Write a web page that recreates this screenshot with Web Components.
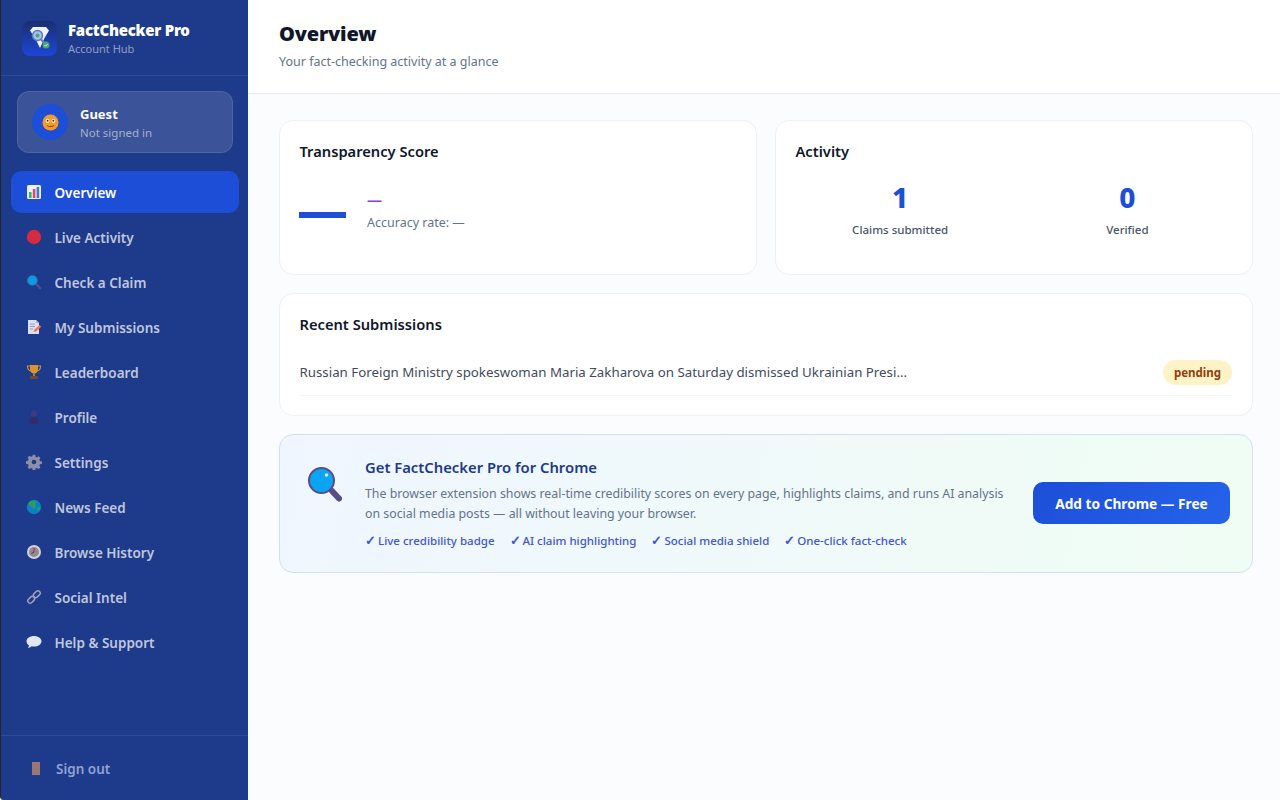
<!doctype html>
<html lang="en"><head><meta charset="utf-8"><title>FactChecker Pro</title>
<style>
html,body{margin:0;height:100%;}
body{font-family:"Noto Sans","Open Sans","Liberation Sans",sans-serif;background:#fff;overflow:hidden;}
</style></head>
<body>
<fc-app>
  <fc-sidebar slot="side">
    <fc-brand slot="brand"></fc-brand>
    <fc-user slot="user"></fc-user>
    <fc-nav-item active><svg slot="icon" viewBox="0 0 16 16" width="16" height="16"><rect x="1" y="1" width="14" height="14" rx="1.500" fill="#eef1f5"/><rect x="3" y="8" width="2.600" height="6" fill="#2fb96a"/><rect x="6.800" y="5" width="2.600" height="9" fill="#e83f72"/><rect x="10.600" y="3" width="2.600" height="11" fill="#3a7bd5"/></svg>Overview</fc-nav-item>
    <fc-nav-item><svg slot="icon" viewBox="0 0 16 16" width="16" height="16"><circle cx="8" cy="8" r="7.200" fill="#d42c3e"/></svg>Live Activity</fc-nav-item>
    <fc-nav-item><svg slot="icon" viewBox="0 0 16 16" width="16" height="16"><path d="M10 10l4.200 4.200" stroke="#5b4a8c" stroke-width="2" stroke-linecap="round"/><circle cx="6.400" cy="6.400" r="5" fill="#0a9be8" stroke="#3c5f9a" stroke-width=".8"/></svg>Check a Claim</fc-nav-item>
    <fc-nav-item><svg slot="icon" viewBox="0 0 16 16" width="16" height="16"><path d="M2 1h8l3 3v11H2z" fill="#dcdff0"/><path d="M10 1l3 3h-3z" fill="#aab0cc"/><path d="M4 5h5M4 7.500h5M4 10h3" stroke="#8d93b5" stroke-width=".9"/><path d="M7.500 13l1-2.600 5-4.400 1.800 1.800-4.800 4.400z" fill="#f0764f"/></svg>My Submissions</fc-nav-item>
    <fc-nav-item><svg slot="icon" viewBox="0 0 16 16" width="16" height="16"><path d="M4 1h8v4.500c0 2.500-1.700 4-4 4s-4-1.500-4-4z" fill="#d9952b"/><path d="M4 2H1.500c0 3 1 4.500 3 5M12 2h2.500c0 3-1 4.500-3 5" fill="none" stroke="#d9952b" stroke-width="1.100"/><rect x="7" y="9" width="2" height="3" fill="#b87820"/><rect x="4" y="12" width="8" height="3" rx=".6" fill="#6b4a3a"/></svg>Leaderboard</fc-nav-item>
    <fc-nav-item><svg slot="icon" viewBox="0 0 16 16" width="16" height="16"><circle cx="8" cy="4.500" r="3.200" fill="#3c3a80"/><path d="M3.500 15v-2.500c0-3 2-4.500 4.500-4.500s4.500 1.500 4.500 4.500V15z" fill="#2f2c70"/></svg>Profile</fc-nav-item>
    <fc-nav-item><svg slot="icon" viewBox="0 0 16 16" width="16" height="16"><path d="M6.800 .8h2.400l.4 2 1.300.6 1.800-1.100 1.700 1.700-1.100 1.800.6 1.300 2 .4v2.400l-2 .4-.6 1.300 1.100 1.800-1.700 1.700-1.800-1.100-1.300.6-.4 2H6.800l-.4-2-1.300-.6-1.800 1.100-1.700-1.700 1.100-1.800-.6-1.300-2-.4V6.900l2-.4.6-1.300L1.600 3.400 3.300 1.700l1.800 1.100 1.300-.6z" fill="#8b8fa8"/><circle cx="8" cy="8" r="2.300" fill="#1e3a8a"/></svg>Settings</fc-nav-item>
    <fc-nav-item><svg slot="icon" viewBox="0 0 16 16" width="16" height="16"><circle cx="8" cy="8" r="7.200" fill="#0d7fc4"/><path d="M3 3.500c2-2 5-2.500 6-1.800l1.500 2-1.500 1.500 1 2-2.500 3-1.500-2.500-3-1zM11 9l2.500-1 .8 2-2 2.500z" fill="#2f9d57"/></svg>News Feed</fc-nav-item>
    <fc-nav-item><svg slot="icon" viewBox="0 0 16 16" width="16" height="16"><circle cx="8" cy="8" r="7" fill="#d4d2d6"/><circle cx="8" cy="8" r="5" fill="#8f8a95"/><path d="M8 8V4" stroke="#b93a3a" stroke-width="1.300"/><path d="M8 8l-2.500 1.500" stroke="#3a3a4a" stroke-width="1"/></svg>Browse History</fc-nav-item>
    <fc-nav-item><svg slot="icon" viewBox="0 0 16 16" width="16" height="16" fill="none" stroke="#9da3bb" stroke-width="1.500"><rect x="-3.800" y="-2.300" width="7.600" height="4.600" rx="2.300" transform="translate(5.200 10.800) rotate(-45)"/><rect x="-3.800" y="-2.300" width="7.600" height="4.600" rx="2.300" transform="translate(10.800 5.200) rotate(-45)"/></svg>Social Intel</fc-nav-item>
    <fc-nav-item><svg slot="icon" viewBox="0 0 16 16" width="16" height="16"><path d="M8 2c4.200 0 7.500 2.400 7.500 5.300S12.200 12.600 8 12.600c-.9 0-1.700-.1-2.500-.3-1 1-2.300 1.500-3.700 1.500.7-.7 1.100-1.500 1.200-2.400C1.300 10.500.5 9 .5 7.300.5 4.400 3.800 2 8 2z" fill="#dfe6f5"/></svg>Help &amp; Support</fc-nav-item>
    <fc-signout slot="foot"></fc-signout>
  </fc-sidebar>
  <fc-header slot="head" heading="Overview" sub="Your fact-checking activity at a glance"></fc-header>
  <fc-score></fc-score>
  <fc-activity></fc-activity>
  <fc-recent></fc-recent>
  <fc-promo></fc-promo>
</fc-app>
<script>
function def(name, html){
  customElements.define(name, class extends HTMLElement{
    connectedCallback(){
      if(this.shadowRoot) return;
      const r=this.attachShadow({mode:"open"});
      r.innerHTML=typeof html==="function"?html(this):html;
    }
  });
}
const base=':host{font-family:"Noto Sans","Open Sans","Liberation Sans",sans-serif;box-sizing:border-box;}*{box-sizing:border-box;}';
def("fc-app",`<style>${base}
:host{display:grid;grid-template-columns:248px 1fr;height:800px;background:#fff;}
.main{display:flex;flex-direction:column;min-width:0;height:800px;}
.body{flex:1;background:#fbfcfe;padding:26px 27px 0 31px;display:grid;grid-template-columns:478px 478px;column-gap:18px;grid-template-rows:155px 123px 139px;row-gap:18px;align-content:start;}
::slotted(fc-recent),::slotted(fc-promo){grid-column:1 / -1;}
</style><slot name="side"></slot><div class="main"><slot name="head"></slot><div class="body"><slot></slot></div></div>`);
def("fc-sidebar",`<style>${base}
:host{display:flex;flex-direction:column;background:#1e3a8a;border-left:1px solid #23242c;border-bottom-left-radius:4px;height:800px;}
nav{display:flex;flex-direction:column;gap:3px;padding:18px 9px 0 10px;flex:1;}
</style><slot name="brand"></slot><slot name="user"></slot><nav><slot></slot></nav><slot name="foot"></slot>`);
def("fc-brand",`<style>${base}
:host{display:flex;align-items:center;gap:11px;height:76px;padding:2px 0 0 21px;border-bottom:1px solid rgba(255,255,255,.09);}
.t{font-size:15px;font-weight:900;color:#fff;line-height:20px;letter-spacing:-.25px;}
.s{font-size:11px;color:rgba(255,255,255,.5);line-height:16px;margin-top:1px;}
svg{display:block;}
</style><svg width="35" height="35" viewBox="0 0 35 35"><defs><linearGradient id="g" x1="0" y1="0" x2="0" y2="1"><stop offset="0" stop-color="#1a2f70"/><stop offset="1" stop-color="#1d46d8"/></linearGradient></defs><rect width="35" height="35" rx="8" fill="url(#g)"/><path d="M8 9.500l3-3.500h13l3 3.500-4.500 7.500-4.500 10-5-10z" fill="#eef3fb"/><circle cx="15.500" cy="14.500" r="5" fill="#9fc6e8" stroke="#5f78c8" stroke-width="1.500"/><circle cx="15.500" cy="14.500" r="2" fill="#4fa56a"/><path d="M19 18.500l4 4" stroke="#5f78c8" stroke-width="2"/><circle cx="24" cy="24" r="3.500" fill="#46a86c"/><path d="M22.500 24l1.200 1.200 2-2.200" stroke="#fff" stroke-width=".8" fill="none"/></svg><div><div class="t">FactChecker Pro</div><div class="s">Account Hub</div></div>`);
def("fc-user",`<style>${base}
:host{display:flex;align-items:center;gap:12px;margin:15px 15px 0 16px;height:62px;padding:0 14px;border:1px solid rgba(255,255,255,.1);border-radius:12px;background:rgba(255,255,255,.13);}
.a{width:36px;height:36px;border-radius:50%;background:#1d4ed8;display:flex;align-items:center;justify-content:center;flex:none;}
.x{padding-top:2px;}
.n{font-size:13px;font-weight:700;color:#fff;line-height:18px;}
.s{font-size:11.500px;color:rgba(255,255,255,.55);line-height:16px;margin-top:2px;}
</style><div class="a"><svg width="17" height="17" viewBox="0 0 17 17"><circle cx="8.500" cy="8.500" r="8" fill="#f59a23"/><circle cx="5.600" cy="6.800" r="2" fill="#fff"/><circle cx="11.400" cy="6.800" r="2" fill="#fff"/><circle cx="5.600" cy="6.800" r="1" fill="#333"/><circle cx="11.400" cy="6.800" r="1" fill="#333"/><path d="M5 11.500c1.500 1.500 5 1.500 7 0" stroke="#7a4a12" stroke-width="1" fill="none"/></svg></div><div class="x"><div class="n">Guest</div><div class="s">Not signed in</div></div>`);
def("fc-nav-item",`<style>${base}
:host{display:flex;align-items:center;height:42px;padding:0 14.500px;gap:13px;border-radius:10px;font-size:13.500px;font-weight:600;color:rgba(255,255,255,.72);}
:host([active]){background:#1d4ed8;color:#fff;}
.i{width:16px;height:16px;display:flex;justify-content:center;flex:none;}
.l{padding-top:2px;}
</style><span class="i"><slot name="icon"></slot></span><span class="l"><slot></slot></span>`);
def("fc-signout",`<style>${base}
:host{display:flex;align-items:center;gap:15px;height:65px;padding:1px 0 0 30px;border-top:1px solid rgba(255,255,255,.09);font-size:13.500px;font-weight:600;color:#8fa2d6;}
</style><svg width="10" height="15" viewBox="0 0 10 15"><rect x="1" y="1" width="8" height="13" fill="#9a7772"/></svg><span>Sign out</span>`);
def("fc-header",e=>`<style>${base}
:host{display:block;height:94px;flex:none;padding:20px 31px 0;background:#fff;border-bottom:1px solid #e9edf2;}
h1{margin:0;font-size:20px;font-weight:900;color:#0f172a;line-height:28px;letter-spacing:-.2px;}
p{margin:4px 0 0;font-size:12.500px;color:#64748b;line-height:20px;}
</style><h1>${e.getAttribute("heading")}</h1><p>${e.getAttribute("sub")}</p>`);
const card=':host{display:block;background:#fff;border:1px solid #eef1f5;border-radius:14px;padding:20px 20px 20px 19.500px;}h2{margin:0;font-size:14.700px;font-weight:600;color:#0f172a;line-height:20px;}';
def("fc-score",`<style>${base}${card}
.r{display:flex;align-items:center;gap:21px;margin-top:28px;}
.bar{width:47px;height:6px;background:#1d4ed8;margin:8px 0 0 -.5px;}
.d{font-size:15px;font-weight:700;color:#9333ea;line-height:24px;margin-top:-2px;}
.a{font-size:12.500px;color:#64748b;line-height:18px;margin-top:3px;}
</style><h2>Transparency Score</h2><div class="r"><div class="bar"></div><div><div class="d">—</div><div class="a">Accuracy rate: —</div></div></div>`);
def("fc-activity",`<style>${base}${card}
.g{display:grid;grid-template-columns:1fr 1fr;text-align:center;margin:18px -9px 0;}
.n{font-size:28px;font-weight:800;color:#1d4ed8;line-height:36px;}
.l{font-size:11.500px;font-weight:500;color:#475569;line-height:16px;margin-top:7px;}
</style><h2>Activity</h2><div class="g"><div><div class="n">1</div><div class="l">Claims submitted</div></div><div><div class="n">0</div><div class="l">Verified</div></div></div>`);
def("fc-recent",`<style>${base}${card}
.row{display:flex;align-items:center;justify-content:space-between;margin-top:15px;height:47px;border-bottom:1px solid #f3f5f8;}
.t{font-size:13.300px;color:#3f4b5e;white-space:nowrap;}
.b{font-size:11.500px;font-weight:700;color:#92400e;background:#fef3c7;border-radius:13px;height:25px;width:69px;display:flex;align-items:center;justify-content:center;}
</style><h2>Recent Submissions</h2><div class="row"><span class="t">Russian Foreign Ministry spokeswoman Maria Zakharova on Saturday dismissed Ukrainian Presi...</span><span class="b">pending</span></div>`);
def("fc-promo",`<style>${base}
:host{display:flex;align-items:center;padding:0 22px 0 28px;border:1px solid #cfe0f7;border-radius:14px;background:linear-gradient(100deg,#eff6ff,#f0fdf4);}
svg{flex:none;margin:0 21px 38px 0;display:block;}
.c{flex:1;min-width:0;margin-bottom:2px;}
h3{margin:0;font-size:14.800px;font-weight:600;color:#1e3a8a;line-height:20px;}
p{margin:7px 0 0;font-size:12.350px;color:#64748b;line-height:20px;width:650px;}
.f{display:flex;gap:15px;margin-top:9px;font-size:11.500px;font-weight:500;color:#4356d0;line-height:16px;height:16px;}
.f b{display:inline-block;width:13px;font-size:13px;font-weight:600;line-height:14px;}
.btn{flex:none;width:197px;height:42px;margin-bottom:2px;padding-top:2px;border-radius:10px;background:linear-gradient(135deg,#1d4ed8,#2563eb);color:#fff;font-size:13.700px;font-weight:700;display:flex;align-items:center;justify-content:center;}
</style><svg width="36" height="36" viewBox="0 0 36 36"><path d="M24 24l7 7.500" stroke="#5b4a8c" stroke-width="6" stroke-linecap="round"/><circle cx="13.500" cy="13.500" r="12.500" fill="#0aa5f0" stroke="#5b4a8c" stroke-width="2"/><circle cx="18.500" cy="8" r="1.800" fill="#cfeeff"/></svg><div class="c"><h3>Get FactChecker Pro for Chrome</h3><p>The browser extension shows real-time credibility scores on every page, highlights claims, and runs AI analysis on social media posts — all without leaving your browser.</p><div class="f"><span><b>✓</b>Live credibility badge</span><span><b>✓</b>AI claim highlighting</span><span><b>✓</b>Social media shield</span><span><b>✓</b>One-click fact-check</span></div></div><div class="btn">Add to Chrome — Free</div>`);
</script>
</body></html>
